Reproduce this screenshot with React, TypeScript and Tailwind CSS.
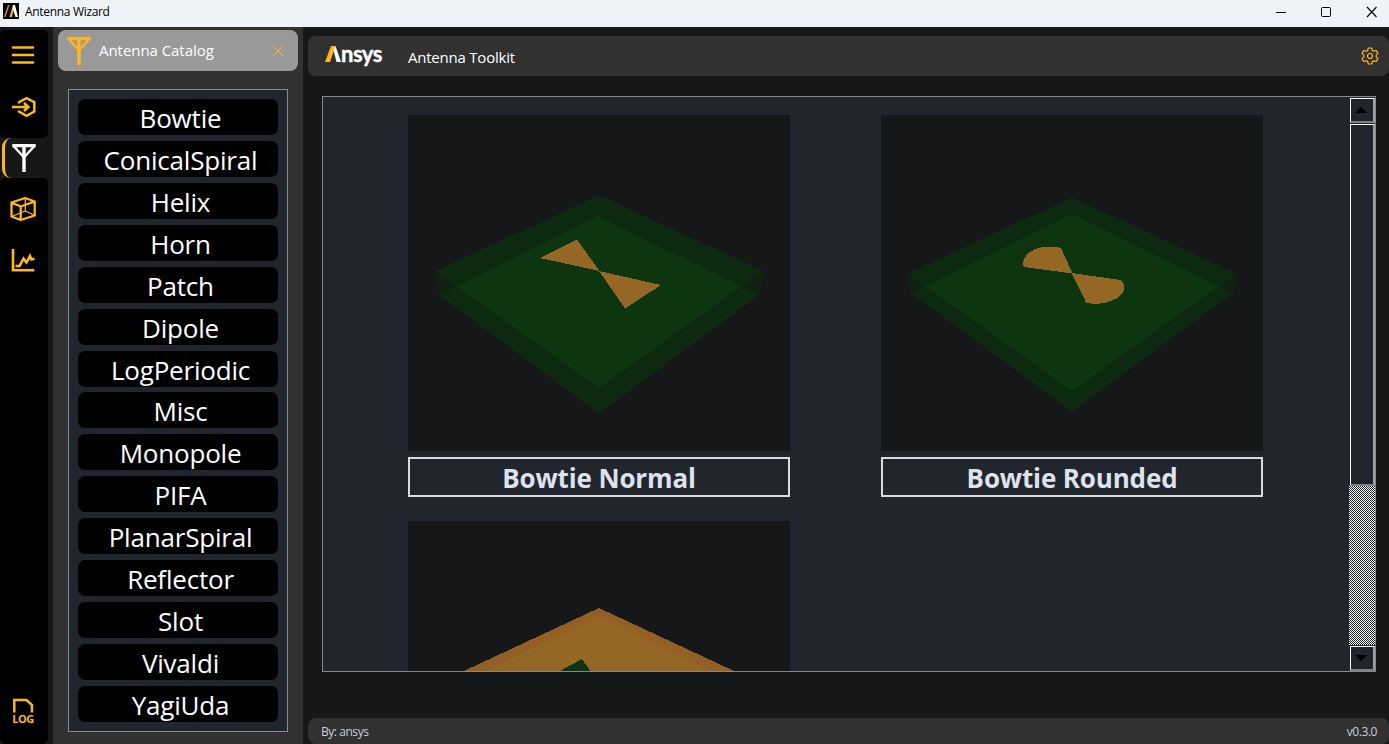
import type { ReactNode } from "react";

const antennas = [
  "Bowtie", "ConicalSpiral", "Helix", "Horn", "Patch", "Dipole", "LogPeriodic", "Misc",
  "Monopole", "PIFA", "PlanarSpiral", "Reflector", "Slot", "Vivaldi", "YagiUda",
];

function AntennaIcon({ className }: { className: string }) {
  return (
    <svg viewBox="0 0 24 28" className={className} fill="none" stroke="currentColor">
      <path d="M0.3 1.5H23.7M12 1V28" strokeWidth="3.400" />
      <path d="M1.200 1.500L12 13.500L22.800 1.500" strokeWidth="2.400" />
    </svg>
  );
}

function TitleBar() {
  return (
    <header className="flex h-[27px] shrink-0 items-center bg-[#eff3f7] text-black">
      <svg viewBox="0 0 16 16" className="mt-[-5px] ml-[3px] h-4 w-4">
        <rect width="16" height="16" fill="#000" />
        <path d="M1 14L5 2H6.500L2.500 14Z" fill="#d99a1c" />
        <path d="M6.500 14L10 2H11.500L9 14Z" fill="#ffb71b" />
        <path d="M10 2H12L15 14H12.500L9.800 6Z" fill="#fff" />
      </svg>
      <span className="mt-[-4px] ml-[6px] text-[12px] leading-4 tracking-[-0.32px]">Antenna Wizard</span>
      <svg viewBox="0 0 110 12" className="mt-[-4px] mr-[10px] ml-auto h-3 w-[110px]" fill="none" stroke="#000">
        <path d="M7 6.500H17" />
        <rect x="52.500" y="1.500" width="9" height="9" rx="1" />
        <path d="M98 1L107.500 11M107.500 1L98 11" strokeWidth="1.100" />
      </svg>
    </header>
  );
}

function NavRail() {
  return (
    <nav className="flex w-[53px] shrink-0 flex-col bg-[#161719] pt-[3px] text-[#ffb71b]">
      <div className="flex h-[108px] w-12 flex-col rounded-[5px] bg-black pl-[10px]">
        <svg viewBox="0 0 26 20" className="mt-[15px] h-5 w-[26px] shrink-0" stroke="currentColor" strokeWidth="2.600" strokeLinecap="round">
          <path d="M3 2.500H23M3 10H23M3 17.500H23" />
        </svg>
        <svg viewBox="0 0 28 24" className="mt-[30px] h-6 w-7 shrink-0" fill="none" stroke="currentColor" strokeWidth="2.500">
          <path d="M9 8.500V7.200L16.500 3.200L24.300 7.200V16.500L16.500 20.800L9 16.500V15.500" />
          <path d="M2 12H18M14 8L18.300 12L14 16" strokeWidth="2.700" />
        </svg>
      </div>
      <div className="h-10 w-12">
        <div className="ml-[2px] flex h-10 items-center rounded-[9px] border-l-3 border-[#ffb71b] pl-[7px] text-white">
          <AntennaIcon className="h-7 w-6" />
        </div>
      </div>
      <div className="flex w-12 grow flex-col rounded-[5px] bg-black pl-[10px]">
        <svg viewBox="0 0 26 26" className="mt-[18px] h-[26px] w-[26px] shrink-0" fill="none" stroke="currentColor" strokeWidth="2.300" strokeLinejoin="round">
          <path d="M1.500 6.500L15.200 2L24.700 5.500V19.500L10.700 24L1.500 20.500ZM1.500 6.500L10.700 10.500L24.700 5.500M10.700 10.500V24" />
          <path d="M15.300 2V15M1.500 20.500L15.300 15L24.700 19.500" strokeWidth="1.300" />
        </svg>
        <svg viewBox="0 0 25 24" className="mt-[26px] h-6 w-[25px] shrink-0" fill="none" stroke="currentColor" strokeWidth="2.600">
          <path d="M3 1V22.200H24.300" />
          <path d="M5.500 18H9.500L13.500 10.700L16.500 14.500L20 8L21.500 11.500L24.500 10.700" />
        </svg>
        <div className="mt-auto mb-[19px] flex w-[26px] flex-col items-center">
          <svg viewBox="0 0 22 15" className="h-[15px] w-[22px]" fill="none" stroke="currentColor" strokeWidth="2.500">
            <path d="M2.300 14.500V2H14.500L20 7V14.500" />
          </svg>
          <span className="text-[11px] leading-[12px] font-bold tracking-[-0.4px]">LOG</span>
        </div>
      </div>
    </nav>
  );
}

function Catalog() {
  return (
    <aside className="flex w-[250px] shrink-0 flex-col bg-[#313131] px-[5px] pt-[3px] pb-[12px]">
      <div className="flex h-[41px] shrink-0 items-center rounded-[8px] bg-[#999999] pr-[14px] pl-[9px] text-[#ffb71b]">
        <AntennaIcon className="h-7 w-6" />
        <h2 className="ml-[8px] text-[15px] tracking-[-0.05px] text-white">Antenna Catalog</h2>
        <svg viewBox="0 0 12 12" className="ml-auto h-3 w-3" stroke="currentColor">
          <path d="M1 1L11 11M11 1L1 11" />
        </svg>
      </div>
      <div className="mx-[10px] mt-[18px] flex min-h-0 grow flex-col border border-[#868b95] bg-[#21252d] px-[9px] pt-[9px]">
        {antennas.map((name) => (
          <div key={name} className="h-[41.930px] shrink-0">
            <button className="flex h-9 w-full items-center justify-center rounded-[7px] bg-black pt-[2px] pl-[5px] text-[26px] leading-[34px] tracking-[-0.2px] text-white">
              {name}
            </button>
          </div>
        ))}
      </div>
    </aside>
  );
}

function Brand() {
  return (
    <div className="flex h-6 w-[60px] items-start pt-[2px] text-white">
      <svg viewBox="0 0 16 17" className="h-[17px] w-4 shrink-0">
        <path d="M0 16L6 0H10.500L5 16Z" fill="#ffb71b" />
        <path d="M8.500 4L10.500 0L16 16H11.500Z" fill="#fff" />
      </svg>
      <span className="mt-[-4px] font-['Lato'] text-[22px] leading-6 font-bold tracking-[-0.5px] [-webkit-text-stroke:0.400px_white]">nsys</span>
    </div>
  );
}

function Slab({ inner, lower, outer, left, right }: { inner: string; lower: string; outer: string; left: string; right: string }) {
  return (
    <>
      <path d={outer} fill="#0d2a10" />
      <path d={left} fill="#0f2111" />
      <path d={right} fill="#0f2111" />
      <path d={lower} fill="#0d2a10" />
      <path d={inner} fill="#0d350f" />
    </>
  );
}

function Preview({ children, label }: { children: ReactNode; label?: string }) {
  return (
    <article className="w-[382px]">
      <svg viewBox="0 0 382 336" className="block h-[336px] w-[382px] bg-[#161719]" shapeRendering="crispEdges">
        {children}
      </svg>
      {label && (
        <h3 className="mt-[6px] flex h-10 items-center justify-center border-2 border-[#dcdcdc] pt-px text-[26px] leading-8 font-bold tracking-[-0.14px] text-[#dde2ec]">
          {label}
        </h3>
      )}
    </article>
  );
}

function ScrollButton({ d }: { d: string }) {
  return (
    <div className="flex h-[25px] shrink-0 items-center justify-center border-t border-r-2 border-b-2 border-l border-t-white border-r-[#a0a0a0] border-b-[#808080] border-l-white">
      <svg viewBox="0 0 12 6" className="mr-[2px] h-[6px] w-3">
        <path d={d} fill="#000" />
      </svg>
    </div>
  );
}

function Gallery() {
  return (
    <section className="mr-[13px] ml-[14px] flex h-[576px] shrink-0 overflow-hidden border border-[#84878c] bg-[#21252d]">
      <div className="grid grow grid-cols-[382px_382px] content-start gap-x-[91px] gap-y-6 pt-[18px] pl-[85px]">
        <Preview label="Bowtie Normal">
          <Slab
            outer="M191 80.500L355 156L351 180L191 298.500L31 180L27 156Z"
            left="M27 156L48 171.500L31 180Z"
            right="M355 156L334 171.500L351 180Z"
            lower="M48 171.500L191 273L334 171.500L351 180L191 298.500L31 180Z"
            inner="M191 101L333 171.500L191 273L49 171.500Z"
          />
          <path d="M132 143L169 124.500L191.500 156ZM191 156L253 170L217 193.500Z" fill="#946824" />
        </Preview>
        <Preview label="Bowtie Rounded">
          <Slab
            outer="M191 82.500L355 158.500L352 178L191 296.500L30 178L27 158.500Z"
            left="M27 158.500L44.500 171L30 178Z"
            right="M355 158.500L337.500 171L352 178Z"
            lower="M44.500 171L191 276L337.500 171L352 178L191 296.500L30 178Z"
            inner="M191 99L337.500 171L191 276L44.500 171Z"
          />
          <path d="M191.500 158.500L143 152C139 143 149 132 168 131.500C173 131.500 177 132 180 133ZM190.500 158L240 165C247 173 242 182 230 186C222 189.500 211 189.500 205 187.500Z" fill="#946824" />
        </Preview>
        <Preview>
          <path d="M191 87L354 163V190H28V163Z" fill="#945f24" />
          <path d="M191 95L340 167.500H42Z" fill="#946824" />
          <path d="M139 157L174 138L188 158Z" fill="#0d350f" />
        </Preview>
      </div>
      <div className="flex w-[26px] shrink-0 flex-col bg-[repeating-conic-gradient(#ffffff_0_25%,#21252d_0_50%)] bg-[length:2px_2px]">
        <div className="flex flex-col bg-[#21252d] pt-px pl-px">
          <ScrollButton d="M0 6L6 0L12 6Z" />
          <div className="mt-px h-[362px] border-t border-r-2 border-b-2 border-l border-t-white border-r-[#a0a0a0] border-b-[#808080] border-l-white" />
        </div>
        <div className="mt-auto bg-[#21252d] pt-px pl-px">
          <ScrollButton d="M0 0L6 6L12 0Z" />
        </div>
      </div>
    </section>
  );
}

function Gear() {
  return (
    <svg viewBox="0 0 18 18" className="mr-[10px] ml-auto h-[18px] w-[18px]" fill="none" stroke="#ffb71b" strokeWidth="1.200" strokeLinejoin="round">
      <path d="M7.300 1H10.700L11.300 3.400L12.800 4.200L15.200 3.500L16.900 6.400L15.200 8.100V9.900L16.900 11.600L15.200 14.500L12.800 13.800L11.300 14.600L10.700 17H7.300L6.700 14.600L5.200 13.800L2.800 14.500L1.100 11.600L2.800 9.900V8.100L1.100 6.400L2.800 3.500L5.200 4.200L6.700 3.400Z" />
      <circle cx="9" cy="9" r="2.500" />
    </svg>
  );
}

export default function App() {
  return (
    <div className="flex h-[744px] w-[1389px] flex-col overflow-hidden bg-[#161719] font-['Open_Sans',sans-serif]">
      <TitleBar />
      <div className="flex min-h-0 grow">
        <NavRail />
        <Catalog />
        <main className="flex grow flex-col pt-[9px] pl-[5px]">
          <div className="flex h-10 shrink-0 items-center rounded-[8px] bg-[#313131] pl-[17px]">
            <Brand />
            <h1 className="mt-[2px] ml-[23px] text-[15px] tracking-[-0.22px] text-white">Antenna Toolkit</h1>
            <Gear />
          </div>
          <div className="h-5 shrink-0" />
          <Gallery />
          <footer className="mt-auto flex h-[26px] items-center justify-between rounded-[8px] bg-[#313131] pt-[2px] pr-[12px] pl-[13px] text-[12px] tracking-[-0.450px] text-[#c9ced8]">
            <span>By: ansys</span>
            <span>v0.3.0</span>
          </footer>
        </main>
      </div>
    </div>
  );
}
